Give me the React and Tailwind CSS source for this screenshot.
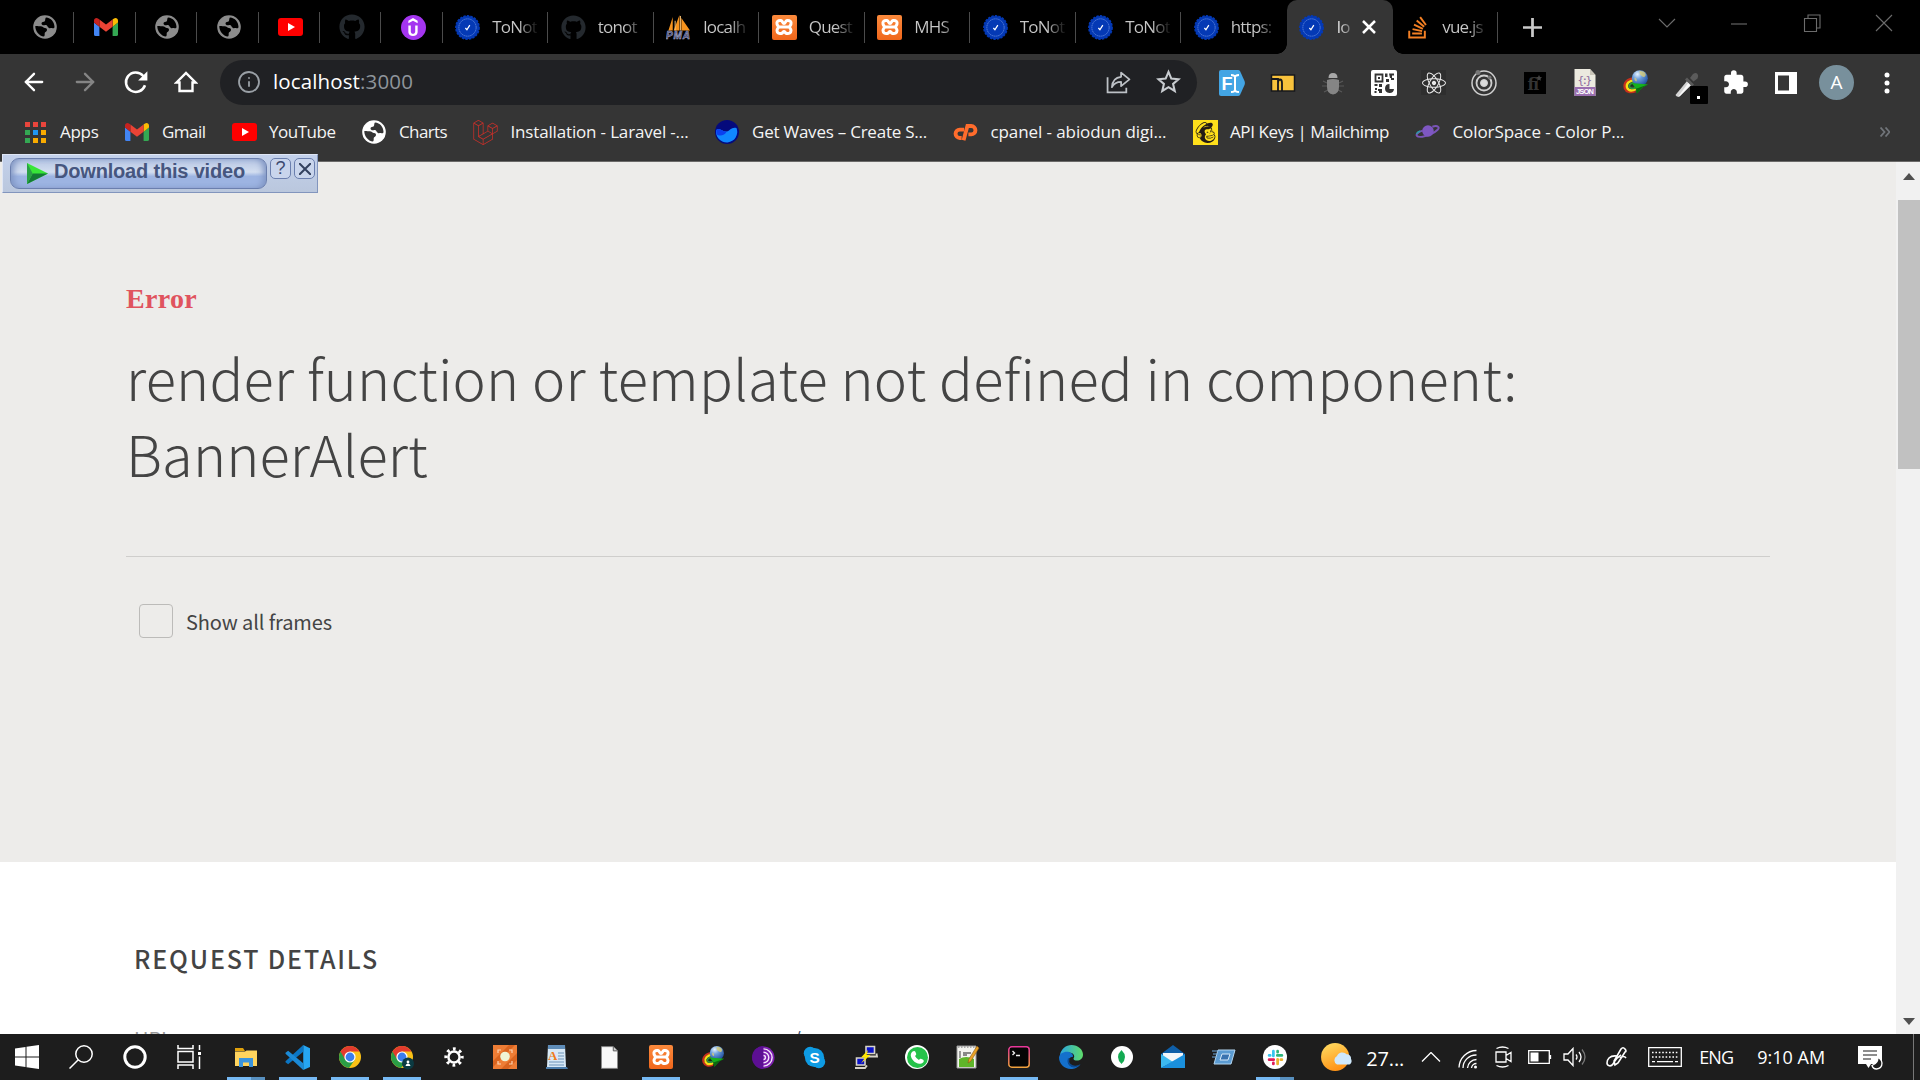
import { useLayoutEffect, useRef, useState } from "react";
import { FaGithub, FaReact, FaStackOverflow } from "react-icons/fa";
import { SiUdemy, SiMailchimp, SiLaravel } from "react-icons/si";
import { MdExtension } from "react-icons/md";
import { ArrowLeft, ArrowRight, Info } from "lucide-react";

/* A line of text whose tracking is adjusted so that it fills the width of its box. */
function Fit({ className = "", children }) {
  const box = useRef(null);
  const text = useRef(null);
  const [tracking, setTracking] = useState(0);
  useLayoutEffect(() => {
    const free = box.current.getBoundingClientRect().width - text.current.getBoundingClientRect().width;
    setTracking(free / text.current.textContent.length);
  }, []);
  return (
    <span ref={box} className={`block shrink-0 whitespace-nowrap ${className}`}>
      <span ref={text} style={{ letterSpacing: `${tracking}px` }}>{children}</span>
    </span>
  );
}

/* ---------- shared icons ---------- */
const Globe = ({ disc, land }) => (
  <svg viewBox="0 0 24 24" className="size-[24px] shrink-0">
    <circle cx="12" cy="12" r="11.800" className={disc} />
    <path className={land} d="M13 2.500c5 .3 8.500 4.500 8.500 9.500 0 .8-1 1.500-2 1.200-1.500-.4-2.200.3-3.500-.2-1.500-.6-1.300-2.500-3-3-1.500-.3-2.200.6-3.500 0-1.500-.8-1.200-2.500.2-2.900 1.800-.4 2.300-.8 2.500-2.100.1-1 .1-1.700.8-2.500z" />
    <path className={land} d="M2.300 11c1.700-.2 4 .3 5.400.3 2 0 2.600 1.700 4.300 1.700 1.500 0 2.500 1.200 1.800 2.700-.6 1.200-2 1-2.100 2.600-.1 1.400.3 2.400-.7 3.300C6 20.800 2.200 16.500 2.300 11z" />
  </svg>
);
const TabGlobe = () => <Globe disc="fill-[#8c8c8c]" land="fill-black" />;

const Gmail = () => (
  <svg viewBox="0 0 24 18" className="h-[18px] w-[24px]">
    <path d="M0 3v13.400Q0 18 1.600 18H5.400V8.700L0 4.600z" fill="#4285f4" />
    <path d="M18.600 18h3.800Q24 18 24 16.400V4.600l-5.400 4.100z" fill="#34a853" />
    <path d="M18.600 1.600v7.100L24 4.600V2.700c0-2.300-2.300-3.400-4-2.100z" fill="#fbbc04" />
    <path d="M5.400 8.700V1.600L12 6.600l6.600-5v7.100L12 13.700z" fill="#ea4335" />
    <path d="M0 2.700v1.900l5.400 4.100V1.600L4 .6C2.300-.7 0 .4 0 2.700z" fill="#c5221f" />
  </svg>
);
const YouTube = () => (
  <svg viewBox="0 0 25 18" className="h-[18px] w-[25px]">
    <rect width="25" height="18" rx="3" fill="#f00" />
    <path d="M10 5v8l7-4z" fill="#fff" />
  </svg>
);
const Seal = () => (
  <svg viewBox="0 0 26 26" className="size-[25px] shrink-0">
    <circle cx="13" cy="13" r="12" fill="#0439b5" stroke="#0439b5" strokeWidth="1.800" strokeDasharray="2.500 1.200" />
    <circle cx="13" cy="13" r="9" fill="none" stroke="#5f86dd" strokeWidth=".9" strokeDasharray="1.500 .6" />
    <path d="M10.800 13.500l1.600 1.800 3-4.800" fill="none" stroke="#fff" strokeWidth="1.300" />
  </svg>
);
const Udemy = () => (
  <span className="flex size-[25px] items-center justify-center rounded-full bg-[#a435f0]">
    <SiUdemy className="size-[18px] text-white" />
  </span>
);
const Pma = () => (
  <svg viewBox="0 0 26 26" className="size-[25px] shrink-0">
    <path d="M7 2l-4.500 14H7zM14 0L8 16h6zM16 3l9 13h-9z" fill="#f7941e" />
    <path d="M9.500 6v10M15 1v15" stroke="#ffc87a" strokeWidth="1" />
    <text x="0" y="25" fontFamily="Liberation Sans" fontWeight="bold" fontStyle="italic" fontSize="10.500" textLength="25" fill="#3f4577" stroke="#b9bbd6" strokeWidth=".5">PMA</text>
  </svg>
);
const Xampp = ({ className = "size-[25px]" }) => (
  <span className={`flex shrink-0 items-center justify-center rounded-[2px] bg-gradient-to-b from-[#fb8a3c] to-[#f0661a] ${className}`}>
    <svg viewBox="0 0 20 20" className="size-[20px]" fill="none" stroke="#fff" strokeWidth="3" strokeLinejoin="round">
      <path d="M7 3.500C4 3 2.500 5 3 7c.3 1.500 1.500 2 1.500 3S3 11.500 3 13.500c0 2.300 2 3.500 4.300 3 1.700-.4 1.700-2 2.700-2s1 1.600 2.700 2c2.300.5 4.300-.7 4.300-3 0-2-1.500-2.500-1.500-3.500S16.700 8.500 17 7c.5-2-1-4-4-3.500-1.700.3-1.500 3-3 3s-1.300-2.700-3-3zM5 10h10" />
    </svg>
  </span>
);
const Idm = ({ className = "size-[27px]" }) => (
  <svg viewBox="0 0 28 28" className={`shrink-0 ${className}`}>
    <defs>
      <radialGradient id="orb" cx=".35" cy=".25" r=".8">
        <stop offset="0" stopColor="#e8f4ff" /><stop offset=".4" stopColor="#6d9fdc" /><stop offset="1" stopColor="#1c4a9a" />
      </radialGradient>
    </defs>
    <path d="M13 9.500C5 10 1.500 15 3 20c1.500 4 6 5 11 3" fill="none" stroke="#c8301c" strokeWidth="2.500" />
    <path d="M13 11.500C7 12 4 15.500 5.300 19.500c1.500 3 5 3.500 9 1.500" fill="none" stroke="#f5e017" strokeWidth="2.500" />
    <path d="M13 14c-4 .5-6 2.500-5.300 4.500 1 2 3 2 6 1" fill="none" stroke="#2f9a3c" strokeWidth="2" />
    <path d="M13 16.500c-2 0-3.200.7-3 1.500" fill="none" stroke="#123a1a" strokeWidth="2" />
    <circle cx="18.500" cy="9.500" r="8.300" fill="url(#orb)" />
    <path d="M18 2c5-.5 8 3 6 5.500-1.500 2-4-.5-5.500-2zM13 9c2 0 3 2 2 4-1.500-.5-2.500-2-2-4z" fill="#e0d070" opacity=".75" />
    <path d="M10 14.500l17 1.500-5.500 3-6 6.500-1-5z" fill="#15b01d" />
    <path d="M15.500 25.500l-1-5L27 16l-5.500 3z" fill="#0a6a10" />
  </svg>
);

/* ---------- tab strip ---------- */
function PinnedTab({ children }) {
  return (
    <div className="flex h-[31px] w-[61.4px] shrink-0 items-center justify-center border-r-[1.500px] border-[#4b4b4b] pl-[3px]">
      {children}
    </div>
  );
}
function Tab({ icon, label, last }) {
  return (
    <div className={`flex h-[31px] w-[105.500px] shrink-0 items-center gap-[12px] border-r-[1.500px] pl-[12.500px] ${last ? "border-transparent" : "border-[#4b4b4b]"}`}>
      {icon}
      <span className="w-[45px] overflow-hidden whitespace-nowrap bg-gradient-to-r from-[#c8c8c8] from-60% to-[#101010] bg-clip-text tracking-[-0.800px] text-transparent">{label}</span>
    </div>
  );
}
function TabStrip() {
  return (
    <div className="flex h-[54px] items-center bg-black pl-[13px] text-[17px]">
      <PinnedTab><TabGlobe /></PinnedTab>
      <PinnedTab><Gmail /></PinnedTab>
      <PinnedTab><TabGlobe /></PinnedTab>
      <PinnedTab><TabGlobe /></PinnedTab>
      <PinnedTab><YouTube /></PinnedTab>
      <PinnedTab><FaGithub className="size-[26px] text-[#24292e]" /></PinnedTab>
      <PinnedTab><Udemy /></PinnedTab>
      <Tab icon={<Seal />} label="ToNot" />
      <Tab icon={<FaGithub className="size-[25px] shrink-0 text-[#24292e]" />} label="tonot" />
      <Tab icon={<Pma />} label="localh" />
      <Tab icon={<Xampp />} label="Quest" />
      <Tab icon={<Xampp />} label="MHS" />
      <Tab icon={<Seal />} label="ToNot" />
      <Tab icon={<Seal />} label="ToNot" />
      <Tab icon={<Seal />} label="https:" last />
      <div className="relative flex h-full w-[106px] shrink-0 items-center rounded-t-[10px] bg-[#353535] pl-[12.500px]">
        <span className="absolute -left-[10px] bottom-0 size-[10px] bg-[radial-gradient(circle_at_0_0,#000_9.500px,#353535_10px)]" />
        <span className="absolute -right-[10px] bottom-0 size-[10px] bg-[radial-gradient(circle_at_100%_0,#000_9.500px,#353535_10px)]" />
        <Seal />
        <span className="ml-[12.500px] w-[13px] overflow-hidden bg-gradient-to-r from-white to-[#777] bg-clip-text tracking-[-0.800px] text-transparent">lo</span>
        <svg viewBox="0 0 14 14" className="ml-[12px] size-[14px]" stroke="#fff" strokeWidth="2.500"><path d="M1 1l12 12M13 1L1 13" /></svg>
      </div>
      <Tab icon={<FaStackOverflow className="size-[25px] shrink-0 text-[#f48024]" />} label="vue.js" />
      <svg viewBox="0 0 18 18" className="ml-[25px] size-[19px]" stroke="#c9c9c9" strokeWidth="2.600"><path d="M9 0v18M0 9h18" /></svg>
      <div className="mb-[8px] ml-auto flex items-center pl-1">
        {["M4 8l8 8 8-8", "M4 13h16", "M4.500 7.500h12v13h-12zM8 7V4h12v13h-3.500", "M4 4l16 16M20 4L4 20"].map((d) => (
          <span key={d} className="flex w-[72.300px] justify-center">
            <svg viewBox="0 0 24 24" className="size-6" fill="none" stroke="#6c6c6c" strokeWidth="1.100"><path d={d} /></svg>
          </span>
        ))}
      </div>
    </div>
  );
}

/* ---------- toolbar ---------- */
const Reload = () => (
  <svg viewBox="0 0 24 24" className="size-[26px]" fill="none" stroke="#fff" strokeWidth="2.300">
    <path d="M20.300 15A9 9 0 1 1 18.500 6.200l2 2.200" /><path d="M22.500 2v8.500H14z" fill="#fff" stroke="none" />
  </svg>
);
const Home = () => (
  <svg viewBox="0 0 24 24" className="size-[24px]" fill="none" stroke="#fff" strokeWidth="2.400">
    <path d="M2.500 12.500L12 3l9.500 9.500H18.500V21h-13v-8.500z" />
  </svg>
);
const extensions = [
  <svg viewBox="0 0 26 26" className="size-[26px]">
    <path d="M2 0h17q1.500 0 2 1l4.500 10q.8 2 0 4L21 25q-.5 1-2 1H2Q0 26 0 24V2Q0 0 2 0z" fill="#43a5e4" />
    <text x="2.500" y="20" fontFamily="Liberation Sans" fontWeight="bold" fontSize="18" fill="#fff">F</text>
    <path d="M12 5q4 0 4 2.500Q16 5 20 5M16 7v13M12 22q4 0 4-2.500Q16 22 20 22" fill="none" stroke="#fff" strokeWidth="2" />
  </svg>,
  <svg viewBox="0 0 26 26" className="size-[26px]">
    <rect x="1.500" y="5" width="23" height="16" fill="#f8c23c" stroke="#17181c" strokeWidth="1.500" />
    <path d="M1.500 9h6.500v4M8 21v-8q0-3.500 2-3.500t2 3.500v8" fill="none" stroke="#17181c" strokeWidth="1.800" />
  </svg>,
  <svg viewBox="0 0 26 26" className="size-[26px]">
    <path d="M8.500 8q0-5 4.500-5t4.500 5z" fill="#a8a8a8" />
    <path d="M3 11l4 2M23 11l-4 2M2 16h5M24 16h-5M4 22l4-2M22 22l-4-2" stroke="#595959" strokeWidth="1.200" />
    <path d="M7 10q6-2 12 0v7q0 7-6 7.500-6-.5-6-7.500z" fill="#858585" />
  </svg>,
  <svg viewBox="0 0 26 26" className="size-[26px]">
    <rect width="26" height="26" rx="2" fill="#fff" />
    <path d="M4.500 4.500h7v7h-7z" fill="none" stroke="#333" strokeWidth="1.800" />
    <path d="M7 7h2v2H7zM14 3.500h2.500V7H14zM18 3.500h5v2h-2V8h-2zM15 9h3v3h-3zM20 8h3v2h-3zM3.500 14h3v2h-3zM8 14h3v3H8zM4 18h2v2H4zM7 19h4v4H8v-2H7zM3.500 21h2v2h-2z" fill="#333" />
    <path d="M18.500 14a4.500 4.500 0 1 0 4.500 5h-4.500z" fill="#333" />
  </svg>,
  <span className="flex size-[25px] items-center justify-center bg-[#2e2e2e]"><FaReact className="size-[24px] text-[#e8e8e8]" /></span>,
  <svg viewBox="0 0 26 26" className="size-[26px]" fill="none" stroke="#cfcfcf">
    <circle cx="13" cy="13" r="12" strokeWidth="1.500" /><circle cx="13" cy="13" r="7.500" strokeWidth="1.800" /><circle cx="13" cy="13" r="3.500" fill="#dadada" />
    <circle cx="7" cy="2.500" r="2.500" fill="#777" stroke="none" /><circle cx="18.500" cy="7.500" r="2" fill="#777" stroke="none" />
  </svg>,
  <svg viewBox="0 0 26 26" className="size-[26px]">
    <rect x="2" y="2" width="22" height="22" fill="#000" />
    <text x="5.500" y="20" fontFamily="DejaVu Serif" fontSize="16" fontWeight="bold" textLength="14" fill="#333">fi</text>
    <path d="M17 5l1 2 2 .3-1.500 1.400.4 2L17 9.700l-1.900 1 .4-2L14 7.300l2-.3z" fill="#444" />
  </svg>,
  <svg viewBox="0 0 22 27" className="h-[27px] w-[22px]">
    <path d="M.5 0H16l5.500 6v21H.5z" fill="#eceadf" /><path d="M16 0v6h5.500z" fill="#c9c5b8" />
    <rect x=".5" y="18" width="21" height="9" fill="#9a6fb0" />
    <text x="3.500" y="14.500" fontFamily="DejaVu Sans Mono" fontSize="11" textLength="14.500" fill="#8c6aa0">{"{:}"}</text>
    <text x="2" y="25.300" fontFamily="Liberation Sans" fontWeight="bold" fontSize="7.500" textLength="18" fill="#fff">JSON</text>
  </svg>,
  <Idm />,
  <svg viewBox="0 0 36 36" className="-mr-[9px] -mb-[9px] size-[36px]">
    <path d="M15 12l4 4L8 27q-3 2-4.500-1z" fill="#d4d4d4" /><path d="M16.500 13.500l2.500 2.500L8 27q-1 1-2 1z" fill="#f8f8f8" />
    <path d="M15 8.500l7 7-2 2-7-7zM18 9l3-4q3-2 4.500 0t0 4.500l-4 3z" fill="#5b5b5b" />
    <rect x="18" y="17" width="18" height="18" rx="1" fill="#000" /><rect x="25" y="27" width="3" height="3" fill="#fff" />
  </svg>,
  <MdExtension className="size-[27px] text-white" />,
  <svg viewBox="0 0 22 22" className="size-[22px]"><path d="M0 0h22v22H0zM3 3.500v15h11v-15z" fill="#fff" fillRule="evenodd" /></svg>,
  <span className="flex size-[35px] items-center justify-center rounded-full bg-[#78909c] text-[19px] text-white">A</span>,
  <svg viewBox="0 0 6 22" className="h-[22px] w-[6px]" fill="#fff"><circle cx="3" cy="3" r="2.500" /><circle cx="3" cy="11" r="2.500" /><circle cx="3" cy="19" r="2.500" /></svg>,
];
function Toolbar() {
  return (
    <div className="flex h-[57px] items-center bg-[#353535] pl-[9px]">
      <div className="flex w-[202.500px] pb-px *:w-[50.600px]">
        <span className="flex justify-center"><ArrowLeft className="size-[28px] text-white" strokeWidth={2} /></span>
        <span className="flex justify-center"><ArrowRight className="size-[28px] text-[#858585]" strokeWidth={2} /></span>
        <span className="flex items-center justify-center pl-[2px]"><Reload /></span>
        <span className="flex items-center justify-center"><Home /></span>
      </div>
      <div className="ml-[8.500px] flex h-[45px] w-[977px] items-center rounded-full bg-[#202124] pl-[17px] pr-[16px]">
        <Info className="mb-px size-[24px] text-[#9aa0a6]" strokeWidth={1.800} />
        <Fit className="mb-[2px] ml-[12px] w-[140px] text-[20.500px] text-white">localhost<span className="text-[#8f959b]">:3000</span></Fit>
        <svg viewBox="0 0 24 24" className="mb-px ml-auto size-[25px]" fill="none" stroke="#bdc1c6" strokeWidth="1.700">
          <path d="M1.500 7v14.500h18V17" /><path d="M14.500 2.500l8 6.500-8 6.500v-4c-4.500 0-7 1.500-8.800 5C6 10.500 9.500 7 14.500 6.500z" strokeLinejoin="round" />
        </svg>
        <svg viewBox="0 0 24 24" className="mb-[2px] ml-[25px] size-[25px]" fill="none" stroke="#c8ccd0" strokeWidth="2">
          <path d="M12 2.800l2.700 6.400 6.900.6-5.200 4.500 1.600 6.800-6-3.600-6 3.600 1.600-6.800-5.200-4.500 6.900-.6z" />
        </svg>
      </div>
      <div className="ml-[10.300px] flex">
        {extensions.map((icon, i) => (
          <span key={i} className="flex h-[45px] w-[50.350px] items-center justify-center">{icon}</span>
        ))}
      </div>
    </div>
  );
}

/* ---------- bookmarks ---------- */
const Apps = () => (
  <span className="grid grid-cols-3 gap-[3px] *:size-[5px]">
    <i className="bg-[#e8453c]" /><i className="bg-[#e8453c]" /><i className="bg-[#e8453c]" />
    <i className="bg-[#34a853]" /><i className="bg-[#2196f3]" /><i className="bg-[#f9ab00]" />
    <i className="bg-[#34a853]" /><i className="bg-[#f9ab00]" /><i className="bg-[#f9ab00]" />
  </span>
);
const Waves = () => (
  <svg viewBox="0 0 24 24" className="size-[24px]">
    <circle cx="12" cy="12" r="12" fill="#050a7c" />
    <path d="M1.200 10c3.500-3.500 6.500 2.500 10.500 1.500 3.500-1 5-5 9.800-3.500A10.600 10.600 0 1 1 1.200 10z" fill="#1088ff" />
    <path d="M1.200 10c3.500-3.500 6.500 2.500 10.500 1.500C10 15.500 4 17 1.500 14z" fill="#0b3ff0" />
  </svg>
);
const Cpanel = () => (
  <svg viewBox="0 0 26 18" className="h-[18px] w-[26px]" fill="none" stroke="#ff6c2c" strokeWidth="4">
    <path d="M11.500 6.500H7a4.300 4.300 0 0 0 0 8.700h2" />
    <path d="M11 17.500L15 2.800h4a4.300 4.300 0 0 1 0 8.700h-3" />
  </svg>
);
const Planet = () => (
  <svg viewBox="0 0 26 16" className="h-[16px] w-[26px]">
    <path d="M8 6.500C3 8 .8 10.500 2 12c1.500 2 9 1 15-2s9-6 7-7.500c-1-.8-3.500-.8-6 0" fill="none" stroke="#7a55b8" strokeWidth="2" />
    <circle cx="13.500" cy="7" r="6" fill="#7e57c2" /><path d="M1.500 10q1-2 4-3" fill="none" stroke="#2a9da8" strokeWidth="1.500" />
  </svg>
);
function Bookmark({ icon, label, width }) {
  return (
    <div className="flex items-center gap-[12.500px]">
      <span className="flex size-[25px] shrink-0 items-center justify-center">{icon}</span>
      <Fit className={width}>{label}</Fit>
    </div>
  );
}
function Bookmarks() {
  return (
    <div className="flex h-[51px] items-center gap-[26px] border-b border-[#6b6a69] bg-[#353535] pb-[8px] pl-[22.500px] text-[17px] text-[#f4f4f4]">
      <Bookmark icon={<Apps />} label="Apps" width="w-[38.500px]" />
      <Bookmark icon={<Gmail />} label="Gmail" width="w-[43.500px]" />
      <Bookmark icon={<YouTube />} label="YouTube" width="w-[66.500px]" />
      <Bookmark icon={<Globe disc="fill-white" land="fill-[#353535]" />} label="Charts" width="w-[48px]" />
      <Bookmark icon={<SiLaravel className="size-[25px] text-[#c5302a]" />} label="Installation - Laravel -..." width="w-[178px]" />
      <Bookmark icon={<Waves />} label="Get Waves – Create S..." width="w-[175px]" />
      <Bookmark icon={<Cpanel />} label="cpanel - abiodun digi..." width="w-[176px]" />
      <Bookmark icon={<span className="flex size-[25px] items-center justify-center bg-[#ffe01b]"><SiMailchimp className="size-[21px] text-[#241c15]" /></span>} label="API Keys | Mailchimp" width="w-[159px]" />
      <Bookmark icon={<Planet />} label="ColorSpace - Color P..." width="w-[172px]" />
      <svg viewBox="0 0 10 10" className="ml-auto mr-[30px] size-[10px]" fill="none" stroke="#71757a" strokeWidth="1.800"><path d="M.5.5L4.500 5l-4 4.500M5.500.5l4 4.500-4 4.500" /></svg>
    </div>
  );
}

/* ---------- page ---------- */
function DownloadBar() {
  return (
    <div className="absolute -top-[8px] left-[2px] flex h-[39px] w-[316px] gap-[3px] border border-[#8295bd] border-t-[#dfe6f5] border-l-[#dfe6f5] bg-gradient-to-b from-[#c3d1ec] to-[#bac7dd] pl-[7px] pt-[3px]">
      <div className="flex h-[31px] w-[257px] items-center rounded-[9px] border border-[#6b7fae] bg-gradient-to-b from-[#b4c4e2] via-[#d3def0] via-45% to-[#9db4e2] to-60% pb-[1px] pl-[16px] shadow-[inset_5px_0_6px_-2px_#8096c4,inset_-5px_0_6px_-2px_#8096c4]">
        <svg viewBox="0 0 22 22" className="size-[21px] shrink-0">
          <path d="M0 0l22 11L0 22z" fill="#38e638" /><path d="M0 22l22-11H6z" fill="#147a35" /><path d="M0 0v22l6-11z" fill="#2aa046" />
        </svg>
        <Fit className="-mt-[5px] ml-[6px] w-[191px] font-['Liberation_Sans',sans-serif] text-[20px] font-bold text-[#46567f]">Download this video</Fit>
      </div>
      <span className="flex size-[21px] items-center justify-center rounded-[5px] border border-[#6b7fae] bg-[#c9d5ec] font-['Liberation_Sans',sans-serif] text-[18px] text-[#3c4a70]">?</span>
      <span className="flex size-[21px] items-center justify-center rounded-[5px] border border-[#6b7fae] bg-[#c9d5ec]">
        <svg viewBox="0 0 12 12" className="size-[12px]" stroke="#33415f" strokeWidth="2"><path d="M0 0l12 12M12 0L0 12" /></svg>
      </span>
    </div>
  );
}
function Page() {
  return (
    <main className="relative flex h-[872px] bg-white font-['Noto_Sans_CJK_SC',sans-serif] text-[#444]">
      <DownloadBar />
      <div className="flex-1 overflow-hidden">
        <section className="h-[700px] bg-[#edecea] px-[126px] pt-[121px]">
          <p className="font-['Liberation_Serif',serif] text-[28px] leading-[32px] font-bold text-[#e0535e]"><Fit className="w-[71px]">Error</Fit></p>
          <h1 className="mt-6 text-[56px] leading-[76px] font-light">
            <Fit className="w-[1391.500px]">render function or template not defined in component:</Fit>
            <Fit className="w-[302px]">BannerAlert</Fit>
          </h1>
          <hr className="mt-[65px] border-[#cfcecc]" />
          <label className="mt-[47px] ml-[13px] flex items-center gap-[13px]">
            <span className="size-[34px] rounded-[4px] border border-[#bcbbb9]" />
            <Fit className="mt-[2px] w-[146px] text-[20px]">Show all frames</Fit>
          </label>
        </section>
        <section className="pt-[78px] pl-[134px]">
          <h2 className="text-[25px] leading-[36px] font-medium"><Fit className="w-[245px]">REQUEST DETAILS</Fit></h2>
          <div className="mt-[48px] flex text-[20px] leading-[30px] text-[#999]">
            <span className="w-[659px]">URL</span>
            <span className="text-[#3b5377]">/</span>
          </div>
        </section>
      </div>
      <div className="flex w-[24px] flex-col items-end bg-[#f1f1f1]">
        <span className="flex h-[38px] w-[22px] justify-center pt-[11px]"><svg viewBox="0 0 12 7" className="h-[7px] w-[12px]" fill="#505050"><path d="M0 7l6-7 6 7z" /></svg></span>
        <span className="h-[269px] w-[22px] bg-[#c1c1c1]" />
        <span className="mt-auto flex w-[22px] justify-center pb-[9px]"><svg viewBox="0 0 12 7" className="h-[7px] w-[12px]" fill="#505050"><path d="M0 0l6 7 6-7z" /></svg></span>
      </div>
    </main>
  );
}

/* ---------- taskbar ---------- */
const Chrome = ({ badge }) => (
  <svg viewBox="0 0 24 24" className="size-[24px] overflow-visible">
    <circle cx="12" cy="12" r="11" fill="#fbc116" />
    <path d="M12 12L2.500 6.500A11 11 0 0 0 11 22.950L16.800 14.700z" fill="#2a9d46" />
    <path d="M2.500 6.500A11 11 0 0 1 21.500 6.500H12L7.300 14.700z" fill="#e33b2e" />
    <circle cx="12" cy="12" r="5.600" fill="#fff" /><circle cx="12" cy="12" r="4.400" fill="#3b7ded" />
    {badge && <><circle cx="18" cy="18.500" r="6" fill="#0b3a42" /><circle cx="18" cy="17" r="1.400" fill="#fff" /><path d="M15.500 21q.3-2.500 2.500-2.500t2.500 2.500z" fill="#fff" /></>}
  </svg>
);
const startIcons = [
  <svg viewBox="0 0 24 24" className="size-[24px]" fill="#fff"><path d="M0 3.400L10.500 2v9.500H0zM11.500 1.800L24 0v11.500H11.500zM0 12.500h10.500V22L0 20.600zM11.500 12.500H24V24l-12.500-1.800z" /></svg>,
  <svg viewBox="0 0 24 24" className="size-[24px]" fill="none" stroke="#fff" strokeWidth="1.500"><circle cx="15" cy="9" r="8.200" /><path d="M9.300 14.700L.5 23.500" /></svg>,
  <svg viewBox="0 0 24 24" className="size-[24px]" fill="none" stroke="#fff" strokeWidth="3"><circle cx="12" cy="12" r="10.200" /></svg>,
  <svg viewBox="0 0 24 24" className="size-[24px]" fill="none" stroke="#fff" strokeWidth="1.500"><path d="M1 0v3.500h15V0M1 24v-4h15v4M1 6.500h15v10.500H1zM22.500 0v5M22.500 11.500V24" /><path d="M21 7h3v3h-3z" fill="#fff" stroke="none" /></svg>,
];
const taskIcons = [
  [<svg viewBox="0 0 24 24" className="size-[24px]"><path d="M1 3h8l2 3H1z" fill="#e0a10c" /><path d="M1 6.500h10l1.500-1H23V21H1z" fill="#ffd45e" /><path d="M5 13h14v9h-4v-4.500H9V22H5z" fill="#3b94dd" /></svg>, "split"],
  [<svg viewBox="0 0 24 24" className="size-[25px]"><path d="M17.500 0L24 3v18l-6.500 3z" fill="#26a6f2" /><path d="M17.500 0v6.500L3 18.500.5 16.500v-1z" fill="#0b76c4" /><path d="M17.500 24v-6.500L3 5.500.5 7.500v1z" fill="#1b8ad6" /></svg>, "on"],
  [<Chrome />, "on"],
  [<Chrome badge />, "on"],
  [<svg viewBox="0 0 24 24" className="size-[20px]" fill="none" stroke="#fff"><circle cx="12" cy="12" r="6.700" strokeWidth="3" /><circle cx="12" cy="12" r="9.700" strokeWidth="3.800" strokeDasharray="3.300 4.317" strokeDashoffset="1.600" /></svg>],
  [<svg viewBox="0 0 24 24" className="size-[24px]"><path d="M0 0h24v24H0z" fill="#ee7d35" /><path d="M0 16L16 0h6L0 22zM8 24L24 8v7l-9 9z" fill="#d9641f" /><path d="M5 8V5h3M16 5h3v3M19 16v3h-3M8 19H5v-3" fill="none" stroke="#fbd3b2" strokeWidth="1.200" /><circle cx="12" cy="11.500" r="4.800" fill="#eff3d4" /></svg>],
  [<svg viewBox="0 0 24 24" className="size-[24px]"><path d="M3 0h17l1 22H2z" fill="#d7e8f6" /><path d="M3 0h17v4H3z" fill="#5f8db9" /><path d="M1 22h21l1 2H1z" fill="#4b7cab" /><path d="M13 8h6M13 11h6M13 14h6M4 17h15M4 20h15" stroke="#6f93ba" strokeWidth="1.200" /><text x="3" y="15" fontFamily="Liberation Serif" fontWeight="bold" fontSize="13" fill="#f07a1c">A</text></svg>],
  [<svg viewBox="0 0 18 24" className="h-[23px] w-[17px]"><path d="M.5.5H13l4.500 4.500v18.500H.5z" fill="#f8f8f8" stroke="#888" /><path d="M13 .5V5h4.500" fill="#ccc" stroke="#555" /></svg>],
  [<Xampp className="size-[24px]" />, "on"],
  [<Idm className="size-[24px]" />],
  [<svg viewBox="0 0 24 24" className="size-[23px]" fill="none"><circle cx="12" cy="12" r="11.500" fill="#7d1fb0" /><path d="M12 0a12 12 0 0 0 0 24z" fill="#5c0f93" /><path d="M12 3a9 9 0 0 1 0 18M12 6.500a5.500 5.500 0 0 1 0 11M12 10a2 2 0 0 1 0 4" stroke="#f3e4fa" strokeWidth="1.500" /></svg>],
  [<svg viewBox="0 0 24 24" className="size-[23px]" fill="#0e9be3"><circle cx="7.500" cy="7.500" r="6.700" /><circle cx="16.500" cy="16.500" r="6.700" /><circle cx="12" cy="12" r="10" /><text x="6.700" y="17.800" fontFamily="Liberation Sans" fontWeight="bold" fontSize="16" fill="#fff">S</text></svg>],
  [<svg viewBox="0 0 24 24" className="size-[24px]"><path d="M12 1.500h8.500v7H12zM2.500 13h8.500v7H2.500z" fill="#0a12c8" stroke="#d8d4c8" strokeWidth="1.600" /><path d="M14 11.500h9l-.5-3M1 23h10l2-2.500" stroke="#d8d4c8" strokeWidth="1.800" fill="none" /><path d="M14 5L7 12.500h4l-4 6 9.500-8.500h-4z" fill="#ffe600" /></svg>],
  [<span className="flex size-[24px] items-center justify-center rounded-full bg-white"><span className="flex size-[21px] items-center justify-center rounded-full bg-[#25c24a]"><svg viewBox="0 0 24 24" className="size-[17px]" fill="#fff"><path d="M6 3q2-1 3 1l1.300 3q0 1.500-1.800 3 2 4 5.500 5.500 1.500-2 2.800-1.800l3.200 1.600q1.500 1 .5 3-2 3-5.500 2.500C8 20 3 14 2.500 9 2.500 5.500 4 4 6 3z" /></svg></span></span>],
  [<svg viewBox="0 0 24 24" className="size-[24px]"><path d="M1 1h19v22H1z" fill="#f4f4f0" stroke="#999" /><path d="M3 14q7-4 15 0v8H3z" fill="#5fb52a" /><path d="M4 6v7M7 8h8M7 10h4" stroke="#666" strokeWidth="1.300" /><path d="M21 1l2 2-8 13-3 2 .8-3.800z" fill="#e9a227" stroke="#8a5a14" strokeWidth=".6" /><path d="M2 2h17" stroke="#aaa" strokeDasharray="1.500 1.500" strokeWidth="2" /></svg>],
  [<svg viewBox="0 0 24 24" className="size-[24px]"><defs><linearGradient id="term" x2="0" y2="1"><stop stopColor="#e8369b" /><stop offset="1" stopColor="#f0a23c" /></linearGradient></defs><rect x="1.800" y="1.800" width="20.400" height="20.400" rx="3" fill="#050505" stroke="url(#term)" strokeWidth="1.500" /><path d="M5.500 6l2 2-2 2M9 10.500h4" fill="none" stroke="#eee" strokeWidth="1.400" /></svg>, "on"],
  [<svg viewBox="0 0 24 24" className="size-[24px]"><defs><linearGradient id="edge"><stop stopColor="#2aa5e0" /><stop offset="1" stopColor="#5fdc6a" /></linearGradient></defs><path d="M1 10C2 4 7 0 12.500 0 19 0 24 4.500 24 9.500c0 4-3 6-6 6-3.500 0-4-1.500-3-3 1-2-1-5-5-5-4 0-8 2-9 5z" fill="url(#edge)" /><path d="M0 12.500C.5 9 4 6.800 8 6.800c3.500 0 6.500 2.500 6 5-3 0-6 3-4.500 7 1.500 3.500 7 4.500 12 .5C19 23 15 24 12 24 5 24 0 18.500 0 12.500z" fill="#1470cc" /><path d="M9 13q-2 6 3.500 9 5 1.500 9-2.700-6 3-10-.3-2-2-1-5z" fill="#0b4a92" /></svg>],
  [<span className="flex size-[22px] items-center justify-center rounded-full bg-white"><svg viewBox="0 0 8 16" className="h-[14px] w-[7px]" fill="#13aa52"><path d="M4 0q8 8 0 16-8-8 0-16z" /></svg></span>],
  [<svg viewBox="0 0 24 24" className="size-[24px]"><path d="M0 9l12-9 12 9v6H0z" fill="#0f5fa8" /><path d="M2 8h20v5l-10 6L2 13z" fill="#f3f6f9" /><path d="M0 9l12 8L0 23z" fill="#3cb9f0" /><path d="M24 9L0 23h24z" fill="#1a90dd" /></svg>],
  [<svg viewBox="0 0 24 24" className="size-[24px]"><path d="M6 5h17l-4 14H2z" fill="#5b9bd2" stroke="#b5d6f0" /><path d="M10 9h8l-2 6H8z" fill="#3a73b0" stroke="#d5e8f8" /><path d="M0 6h6M1 9h4M0 12h4" stroke="#6fa8da" /></svg>],
  [<span className="flex size-[24px] items-center justify-center rounded-full bg-white"><svg viewBox="0 0 16 16" className="size-[17px]" fill="none" strokeWidth="2.600" strokeLinecap="round"><path d="M6 2v4.500M2 6h1" stroke="#36c5f0" /><path d="M14 6H9.700M10 2v1" stroke="#2eb67d" /><path d="M10 14V9.700M14 10h-1" stroke="#ecb22e" /><path d="M2 10h4.300M6 14v-1" stroke="#e01e5a" /></svg></span>, "split"],
];
const Line = ({ className, viewBox, children }) => (
  <svg viewBox={viewBox} className={`shrink-0 ${className}`} fill="none" stroke="#fff" strokeWidth="1.300">{children}</svg>
);
function Taskbar() {
  return (
    <footer className="flex h-[46px] items-center bg-[#1d1d1d] text-[18px] text-white">
      {startIcons.map((icon, i) => <span key={i} className="flex w-[54px] shrink-0 justify-center">{icon}</span>)}
      <div className="ml-[4px] flex h-full">
        {taskIcons.map(([icon, state], i) => (
          <div key={i} className={`flex shrink-0 flex-col items-center ${i < 9 ? "w-[51.900px]" : "w-[51.150px]"}`}>
            <span className="flex h-[43px] items-center pt-[3px]">{icon}</span>
            {state && (
              <span className="flex h-[3px] w-[38px] bg-[#76b9f3]">
                {state === "split" && <i className="ml-auto h-full w-[14px] bg-[#5890bf]" />}
              </span>
            )}
          </div>
        ))}
      </div>
      <svg viewBox="0 0 34 32" className="ml-[20.500px] h-[30px] w-[32px] shrink-0">
        <defs><linearGradient id="sun" x2=".4" y2="1"><stop stopColor="#ffe066" /><stop offset="1" stopColor="#ff9417" /></linearGradient></defs>
        <circle cx="15" cy="16" r="15" fill="url(#sun)" />
        <path d="M17 24a5 5 0 0 1 0-9 6 6 0 0 1 10-2 4.500 4.500 0 0 1 5 5c1.500 3 0 6-3 6z" fill="#cfe8fb" />
      </svg>
      <Fit className="mt-[3px] ml-[13px] w-[38px] text-[20px]">27...</Fit>
      <Line viewBox="0 0 20 10" className="ml-[17px] h-[10px] w-[20px]"><path d="M1 9.500l9-9 9 9" /></Line>
      <Line viewBox="0 0 20 20" className="mt-[3px] ml-[17px] size-[20px]"><path d="M1 18.500A17.500 17.500 0 0 1 18.500 1.500M5 19A13 13 0 0 1 18.500 6M9.500 19A9 9 0 0 1 18.500 10.500M13.500 19A5 5 0 0 1 18.500 14.500" /><circle cx="17.500" cy="18" r="1.500" fill="#fff" stroke="none" /></Line>
      <Line viewBox="0 0 18 22" className="ml-[17px] h-[22px] w-[18px]"><path d="M1.500 2.500q6-3 12 0M1.500 19.500q6 3 12 0M1 6h10v10H1zM11 9.500l5-3v9l-5-3" /></Line>
      <Line viewBox="0 0 24 14" className="ml-[15px] h-[14px] w-[24px]"><path d="M.7.700h20.600v12.600H.7zM22.500 5v4" /><path d="M2.500 2.500h8v9h-8z" fill="#fff" stroke="none" /></Line>
      <Line viewBox="0 0 24 20" className="ml-[11px] h-[20px] w-[24px]"><path d="M1 7h4l5-5.500v17L5 13H1zM13 7.500q2 2.500 0 5M16 5q4 5 0 10" /><path d="M19 2.500q6 7.500 0 15" stroke="#777" /></Line>
      <Line viewBox="0 0 22 22" className="ml-[19px] size-[22px]"><path d="M9 19L8 15 15 3q2-2.500 4 0t0 3L12 17zM11 10c-8-1-10 4-10 7s4 4 6 1 3-6 8-9M14 12q4-3 6 0" strokeWidth="1.600" /></Line>
      <Line viewBox="0 0 34 20" className="ml-[20px] h-[20px] w-[34px]"><path d="M.7.700h32.600v18.600H.7z" /><path d="M4 5.500h26M4 10h26" strokeDasharray="1.600 1.800" /><path d="M4 14.700h3M9 14.700h16M27 14.700h3" /></Line>
      <Fit className="ml-[17px] w-[34px]">ENG</Fit>
      <Fit className="ml-[24px] w-[68px]">9:10 AM</Fit>
      <svg viewBox="0 0 25 25" className="ml-[33px] size-[25px] shrink-0"><path d="M0 1h24v18H13l-2.500 4-2.500-4H0z" fill="#fff" /><path d="M5 6h14M5 10h14M5 14h8" stroke="#1d1d1d" strokeWidth="1.200" /><path d="M19.500 12.500q1.500 5-5.500 8 1 3.500 4.500 3.500 5.500-.5 5.500-6-.5-4-4.500-5.500z" fill="#1d1d1d" stroke="#fff" strokeWidth="1.300" /></svg>
      <span className="ml-auto mr-[6px] h-full w-[1.500px] bg-[#777]" />
    </footer>
  );
}

export default function App() {
  return (
    <div className="h-[1080px] w-[1920px] overflow-hidden font-['Open_Sans','Noto_Sans',sans-serif]">
      <TabStrip />
      <Toolbar />
      <Bookmarks />
      <Page />
      <Taskbar />
    </div>
  );
}
